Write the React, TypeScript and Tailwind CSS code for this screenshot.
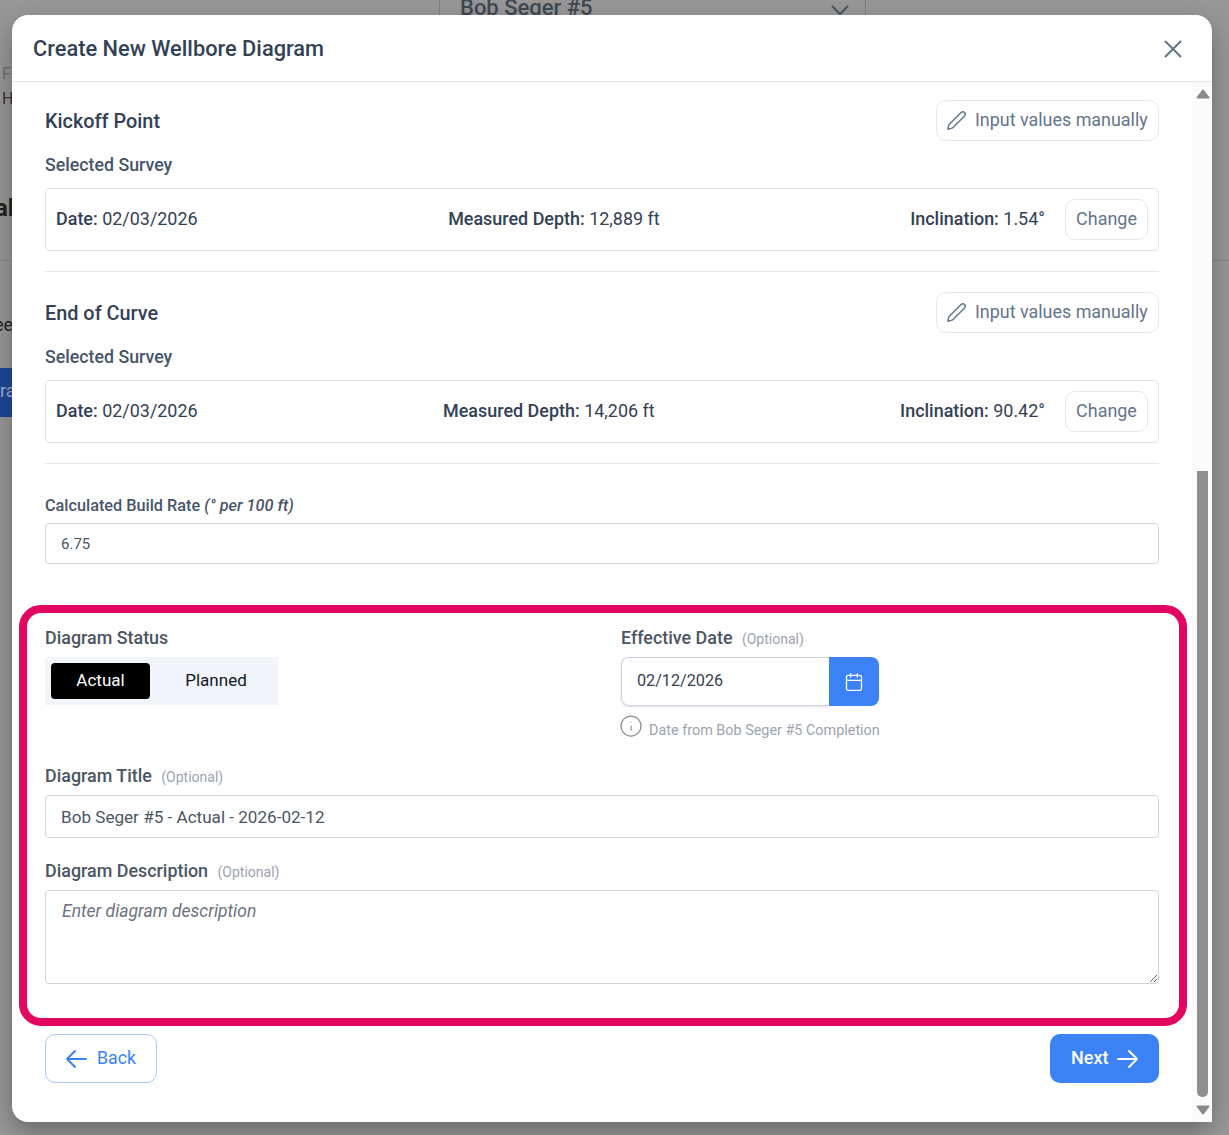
import React from "react";
import { Pen, Calendar, Info } from "lucide-react";

function SurveySection({ title, depth, inc }: { title: string; depth: string; inc: string }) {
  return (
    <section className="border-b border-[#e2e8f0] pb-5 mb-5">
      <div className="flex items-center justify-between h-[41px]">
        <h3 className="text-[19.85px] pt-[2px] font-medium text-[#334155]">{title}</h3>
        <button className="flex items-center h-[41px] w-[223px] pl-[9px] gap-[8px] rounded-[10px] border border-[#e2e8f0] text-[17.92px] text-[#64748b]">
          <Pen size={21} strokeWidth={1.6} />
          <span>Input values manually</span>
        </button>
      </div>
      <div className="mt-[13px] h-[23px] text-[17.75px] leading-[23px] font-medium text-[#475569]">Selected Survey</div>
      <div className="mt-[11px] h-[63px] flex items-center justify-between px-[10px] rounded border border-[#dfe3e8] text-[17.95px] text-[#334155]">
        <div><b className="font-medium">Date:</b> 02/03/2026</div>
        <div><b className="font-medium">Measured Depth:</b> {depth}</div>
        <div className="flex items-center gap-5">
          <div><b className="font-medium">Inclination:</b> {inc}</div>
          <button className="h-[41px] w-[83px] rounded-[10px] border border-[#e2e8f0] text-[#64748b] shrink-0">Change</button>
        </div>
      </div>
    </section>
  );
}

export default function App() {
  return (
    <div className="relative h-[1135px] w-full overflow-hidden bg-[#979797] font-['Roboto',sans-serif]">
      {/* page behind the dialog */}
      <div className="absolute left-[439px] top-[-7px] w-[427px] h-[30px] border-x border-[#7f7f7f] pl-5 text-[22px] leading-[30px] font-medium text-[#3f4853]">Bob Seger #5</div>
      <svg className="absolute left-[830px] top-[4px]" width="20" height="12" viewBox="0 0 20 12" fill="none" stroke="#4a5560" strokeWidth="2"><path d="M2 2l8 8 8-8" /></svg>
      <div className="absolute left-[2px] top-[62px] text-[16px] text-[#6b6b6b]">F</div>
      <div className="absolute left-[2px] top-[87px] text-[16px] text-[#333]">H</div>
      <div className="absolute left-[-5px] top-[190px] text-[24px] font-bold text-[#222]">al</div>
      <div className="absolute left-0 top-[260px] h-px w-full bg-[#858585]" />
      <div className="absolute left-[-6px] top-[311px] text-[18px] text-[#222]">ee</div>
      <div className="absolute left-0 top-[368px] h-[49px] w-[20px] bg-[#1f4796] text-[18px] leading-[46px] text-[#9fb0d0]">ra</div>

      {/* dialog */}
      <div className="relative ml-3 mt-[15px] w-[1200px] h-[1107px] rounded-[16px] bg-white shadow-[0_10px_25px_rgba(0,0,0,0.3)] flex flex-col">
        <header className="flex items-center justify-between h-[67px] shrink-0 border-b border-[#e2e8f0] pl-[21px] pr-[30px]">
          <h2 className="text-[21.8px] pt-[2px] font-medium text-[#334155]">Create New Wellbore Diagram</h2>
          <svg className="mt-[2px]" width="18" height="18" viewBox="0 0 18 18" fill="none" stroke="#64748b" strokeWidth="2" strokeLinecap="round"><path d="M1.5 1.5l15 15M16.5 1.5l-15 15" /></svg>
        </header>
        <div className="flex flex-1 min-h-0">
          <main className="flex-1 min-w-0 pl-[33px] pr-[33px] pt-[18px]">
            <SurveySection title="Kickoff Point" depth="12,889 ft" inc="1.54°" />
            <SurveySection title="End of Curve" depth="14,206 ft" inc="90.42°" />

            <div className="h-[23px] leading-[23px] text-[16.25px] font-medium text-[#475569] mt-[30px]">
              Calculated Build Rate <i className="font-medium">(° per 100 ft)</i>
            </div>
            <div className="mt-[6px] h-[41px] flex items-center pl-[15px] pt-[1px] rounded border border-[#d1d5db] text-[15px] text-[#4b5563]">6.75</div>

            <div className="grid grid-cols-[576px_1fr] mt-[62px]">
              <div>
                <div className="h-[23px] leading-[23px] text-[17.9px] font-medium text-[#4b5563]">Diagram Status</div>
                <div className="mt-[8px] flex items-center w-[233px] h-[48px] px-[6px] bg-[#f1f4f9] text-[17px]">
                  <button className="w-[99px] h-[36px] rounded-[4px] bg-black text-white">Actual</button>
                  <button className="flex-1 h-[36px] pl-[10px] text-[#111827]">Planned</button>
                </div>
              </div>
              <div>
                <div className="h-[23px] leading-[23px] text-[17.9px] font-medium text-[#4b5563]">
                  Effective Date <span className="ml-[5px] text-[14px] font-normal text-[#9ca3af]">(Optional)</span>
                </div>
                <div className="mt-[8px] flex w-[258px] h-[49px]">
                  <div className="w-[208px] pb-[1px] flex items-center pl-[15px] rounded-l-[8px] border border-r-0 border-[#cbd5e1] text-[16.2px] text-[#334155] shadow-sm">02/12/2026</div>
                  <div className="w-[50px] flex items-center justify-center rounded-r-[8px] bg-[#3b82f6] text-white">
                    <Calendar size={20} strokeWidth={1.6} />
                  </div>
                </div>
                <div className="mt-[9px] h-[22px] flex items-center text-[14.4px] text-[#9ca3af]">
                  <Info size={24} strokeWidth={1.25} className="-ml-[2px] mr-[6px] text-[#8b8f96]" />
                  <span className="mt-[9px]">Date from Bob Seger #5 Completion</span>
                </div>
              </div>
            </div>

            <div className="mt-[27px] h-[23px] leading-[23px] text-[17.9px] font-medium text-[#4b5563]">
              Diagram Title <span className="ml-[5px] text-[14px] font-normal text-[#9ca3af]">(Optional)</span>
            </div>
            <div className="mt-[8px] h-[43px] flex items-center pl-[15px] pt-[3px] rounded border border-[#d1d5db] text-[17.1px] text-[#4b5563]">Bob Seger #5 - Actual - 2026-02-12</div>

            <div className="mt-[21px] h-[23px] leading-[23px] text-[17.9px] font-medium text-[#4b5563]">
              Diagram Description <span className="ml-[5px] text-[14px] font-normal text-[#9ca3af]">(Optional)</span>
            </div>
            <textarea
              readOnly
              placeholder="Enter diagram description"
              className="mt-[8px] block w-full h-[94px] px-4 py-[7px] rounded border border-[#d1d5db] text-[17.5px] italic placeholder:text-[#6b7280] outline-none"
            />

            <div className="mt-[50px] flex justify-between">
              <button className="flex items-center w-[112px] h-[49px] pl-[19px] gap-[10px] rounded-[10px] border border-[#a9c9fb] text-[17.8px] text-[#3b82f6]">
                <svg width="22" height="20" viewBox="0 0 22 20" fill="none" stroke="currentColor" strokeWidth="2" strokeLinecap="round" strokeLinejoin="round"><path d="M21 10H2M10 2l-8 8 8 8" /></svg>
                <span>Back</span>
              </button>
              <button className="flex items-center w-[109px] h-[49px] pl-[21px] gap-[9px] rounded-[10px] bg-[#3b82f6] text-[18px] font-medium text-white">
                <span className="pb-[2px]">Next</span>
                <svg width="22" height="20" viewBox="0 0 22 20" fill="none" stroke="currentColor" strokeWidth="2" strokeLinecap="round" strokeLinejoin="round"><path d="M1 10h19M12 2l8 8-8 8" /></svg>
              </button>
            </div>
          </main>
          {/* scrollbar */}
          <div className="w-[20px] shrink-0 bg-[#fbfbfb] flex flex-col items-center pt-[7px] pb-[7px] pl-[1px]">
            <svg width="14" height="10" viewBox="0 0 14 10" fill="#8a8a8a" stroke="#8a8a8a" strokeWidth="2" strokeLinejoin="round"><path d="M7 1.5L12.5 8.5H1.5z" /></svg>
            <div className="mt-[372px] w-[11px] flex-1 rounded-b-[5px] bg-[#8f8f8f]" />
            <svg className="mt-[8px]" width="14" height="10" viewBox="0 0 14 10" fill="#8a8a8a" stroke="#8a8a8a" strokeWidth="2" strokeLinejoin="round"><path d="M7 8.5L12.5 1.5H1.5z" /></svg>
          </div>
        </div>
        {/* annotation */}
        <div className="absolute left-[7px] top-[590px] w-[1168px] h-[421px] rounded-[22px] border-[8px] border-[#e30660] pointer-events-none" />
      </div>
    </div>
  );
}
